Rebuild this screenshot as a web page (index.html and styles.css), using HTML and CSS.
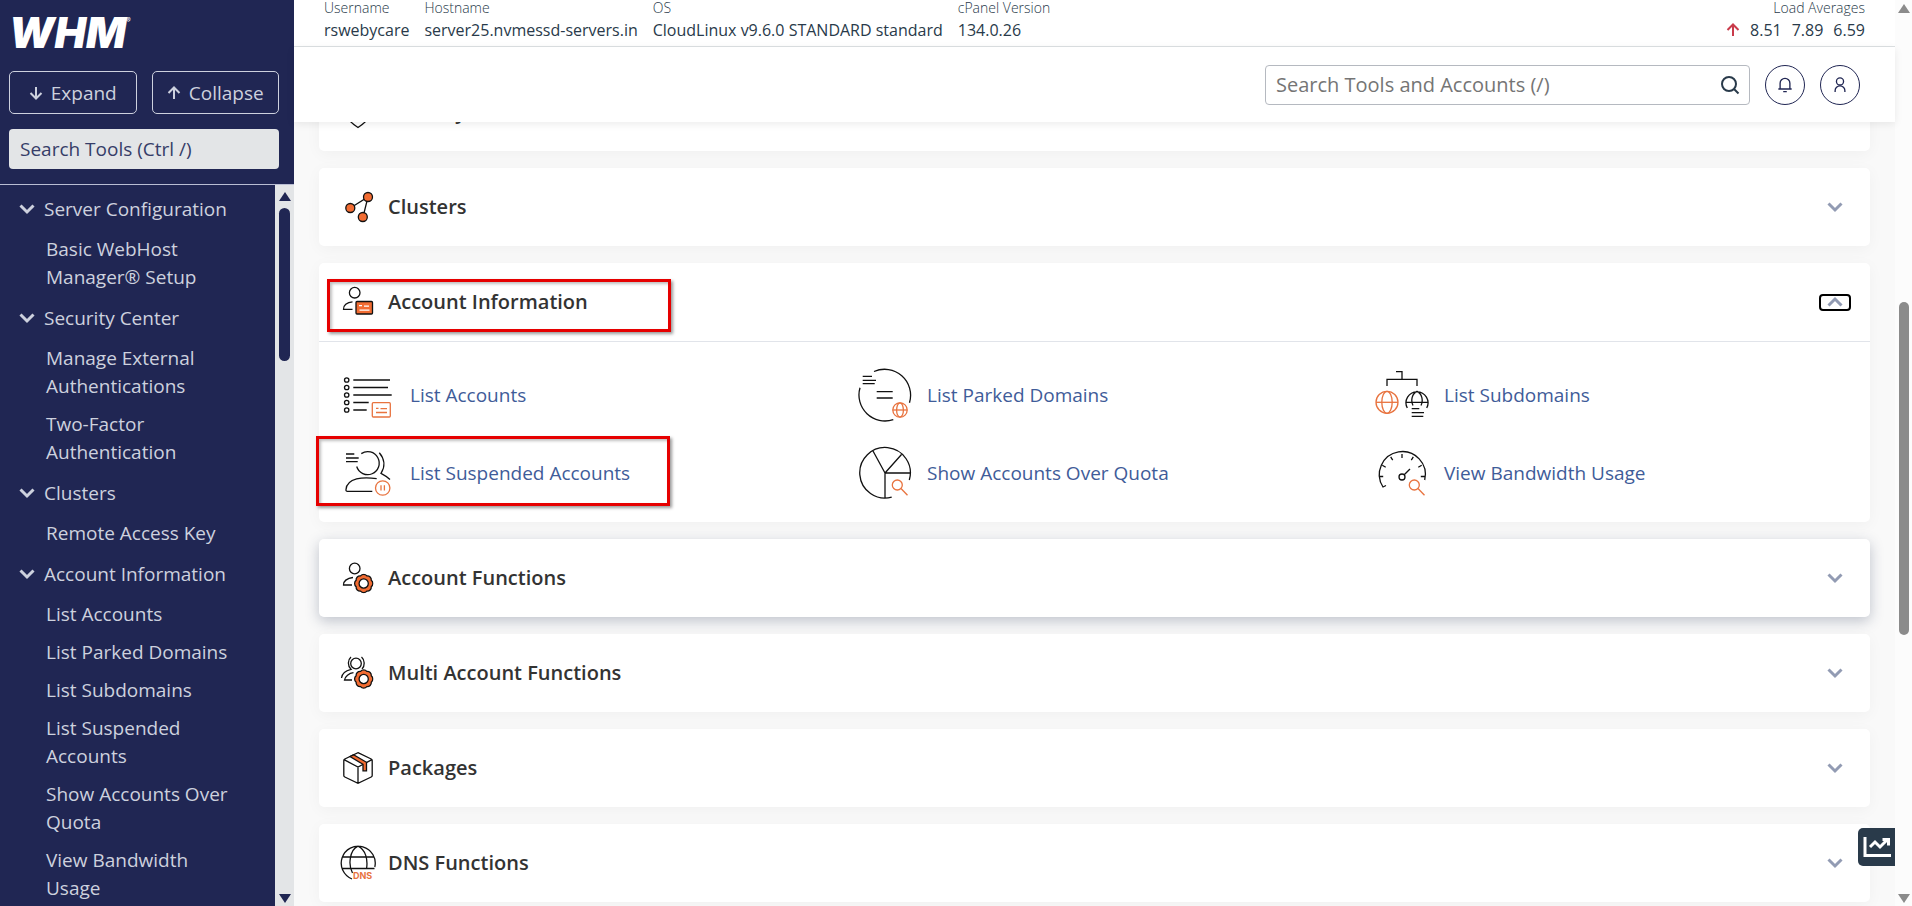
FILE: index.html
```
<!DOCTYPE html>
<html lang="en">
<head>
    <meta charset="UTF-8">
    <title>WHM</title>
    <meta name="viewport" content="width=device-width, initial-scale=1">
    <link rel="stylesheet" href="styles.css">
</head>
<body>
<svg class="defs" aria-hidden="true">
    <symbol id="chevron" viewBox="0 0 16 12"><path d="M1.500 2.500l6.500 6.500 6.500-6.500"/></symbol>
    <symbol id="arrow-up" viewBox="0 0 14 14"><path d="M7 13V1.500M1.500 7L7 1.500 12.500 7"/></symbol>
    <symbol id="gear" viewBox="-10 -10 20 20">
        <path d="M7.580 3.140A4 4 0 0 1 3.140 7.580 4 4 0 0 1-3.140 7.580 4 4 0 0 1-7.580 3.140 4 4 0 0 1-7.580-3.140 4 4 0 0 1-3.140-7.580 4 4 0 0 1 3.140-7.580 4 4 0 0 1 7.580-3.140 4 4 0 0 1 7.580 3.140z"/>
        <circle r="4.600" fill="#fff"/>
    </symbol>
</svg>

<aside class="sidebar">
    <div class="side-head">
        <a class="logo" href="#">WHM<sup>®</sup></a>
        <div class="side-buttons">
            <button type="button"><svg class="arrow down"><use href="#arrow-up"/></svg>Expand</button>
            <button type="button"><svg class="arrow"><use href="#arrow-up"/></svg>Collapse</button>
        </div>
        <input class="side-search" type="text" placeholder="Search Tools (Ctrl /)" aria-label="Search Tools">
    </div>
    <div class="side-body">
        <nav class="menu">
            <button type="button" class="group"><svg class="chev"><use href="#chevron"/></svg>Server Configuration</button>
            <ul>
                <li><a href="#">Basic WebHost Manager® Setup</a></li>
            </ul>
            <button type="button" class="group"><svg class="chev"><use href="#chevron"/></svg>Security Center</button>
            <ul>
                <li><a href="#">Manage External Authentications</a></li>
                <li><a href="#">Two-Factor Authentication</a></li>
            </ul>
            <button type="button" class="group"><svg class="chev"><use href="#chevron"/></svg>Clusters</button>
            <ul>
                <li><a href="#">Remote Access Key</a></li>
            </ul>
            <button type="button" class="group"><svg class="chev"><use href="#chevron"/></svg>Account Information</button>
            <ul>
                <li><a href="#">List Accounts</a></li>
                <li><a href="#">List Parked Domains</a></li>
                <li><a href="#">List Subdomains</a></li>
                <li><a href="#">List Suspended Accounts</a></li>
                <li><a href="#">Show Accounts Over Quota</a></li>
                <li><a href="#">View Bandwidth Usage</a></li>
            </ul>
        </nav>
        <div class="scroll side-scroll" aria-hidden="true">
            <i class="tri"></i><i class="thumb"></i><i class="tri tri-down"></i>
        </div>
    </div>
</aside>

<div class="page">
    <header class="info">
        <dl>
            <div><dt>Username</dt><dd>rswebycare</dd></div>
            <div><dt>Hostname</dt><dd>server25.nvmessd-servers.in</dd></div>
            <div><dt>OS</dt><dd>CloudLinux v9.6.0 STANDARD standard</dd></div>
            <div><dt>cPanel Version</dt><dd>134.0.26</dd></div>
        </dl>
        <dl>
            <div class="load">
                <dt>Load Averages</dt>
                <dd><svg class="arrow load-arrow"><use href="#arrow-up"/></svg><span>8.51</span><span>7.89</span><span>6.59</span></dd>
            </div>
        </dl>
    </header>
    <div class="toolbar">
        <form class="search">
            <input type="text" placeholder="Search Tools and Accounts (/)" aria-label="Search Tools and Accounts">
            <button type="button" aria-label="Search">
                <svg width="20" height="20" viewBox="0 0 20 20"><circle cx="9" cy="9" r="7"/><path d="M14 14l4.500 4.500"/></svg>
            </button>
        </form>
        <button type="button" class="round" aria-label="Notifications">
            <svg width="18" height="18" viewBox="0 0 18 18"><path d="M1.500 13.500h15M3.500 13.500V7a5.500 5.500 0 0 1 11 0v6.500M7 16.500h4"/></svg>
        </button>
        <button type="button" class="round" aria-label="User">
            <svg width="18" height="18" viewBox="0 0 18 18"><circle cx="9" cy="5" r="4"/><path d="M3.500 17v-1.500a5.500 5.500 0 0 1 11 0V17"/></svg>
        </button>
    </div>

    <main class="content">
        <div class="cards">
            <section class="card">
                <div class="card-head">
                    <svg class="icon" viewBox="0 0 36 36"><path d="M18 2l13 4v10c0 8-6 13-13 17.500C11 29 5 24 5 16V6z"/></svg>
                    <h2>Security Center</h2>
                    <button type="button" class="toggle" aria-label="Expand"><svg class="chev"><use href="#chevron"/></svg></button>
                </div>
            </section>

            <section class="card">
                <div class="card-head">
                    <svg class="icon" viewBox="0 0 36 36"><path d="M10.300 19L28 8l-5 20"/><g class="fill"><circle cx="10.300" cy="19" r="4.500"/><circle cx="28" cy="8" r="4.500"/><circle cx="22.800" cy="28" r="4.500"/></g></svg>
                    <h2>Clusters</h2>
                    <button type="button" class="toggle" aria-label="Expand"><svg class="chev"><use href="#chevron"/></svg></button>
                </div>
            </section>

            <section class="card">
                <div class="card-head">
                    <svg class="icon" viewBox="0 0 36 36">
                        <circle cx="14.700" cy="8.700" r="5.300"/><path d="M12.500 17.800C7 18 3 21.500 3.500 25.300h9"/>
                        <rect class="fill" x="16" y="17.500" width="16.500" height="12.500" rx="1"/>
                        <path stroke="#fff" d="M19 21.700h3M24 22.200h5M19.500 26.200h10"/>
                    </svg>
                    <h2>Account Information</h2>
                    <button type="button" class="toggle focus" aria-label="Collapse"><svg class="chev up"><use href="#chevron"/></svg></button>
                    <span class="mark mark-head"></span>
                </div>
                <ul class="tools">
                    <li>
                        <svg class="tool-icon" viewBox="0 0 54 54">
                            <circle cx="5.700" cy="12" r="2.200"/><circle cx="5.700" cy="19.500" r="2.200"/><circle cx="5.700" cy="27" r="2.200"/><circle cx="5.700" cy="34.500" r="2.200"/><circle cx="5.700" cy="42" r="2.200"/>
                            <path d="M12.300 12H49M12.300 19.500H47M12.300 27h38.400M12.300 34.500h15.400M12.300 42h13.400"/>
                            <g class="orange"><rect x="31.300" y="34.700" width="18" height="14.300" rx="1"/><path d="M35 40.300h2.500M39.500 40.700H46M35 44.500h11"/></g>
                        </svg>
                        <a href="#">List Accounts</a>
                    </li>
                    <li>
                        <svg class="tool-icon" viewBox="0 0 54 54">
                            <path d="M16 3.500A26 26 0 0 1 51.500 34.700M35.300 51.600A26 26 0 0 1 2 19.700M4.700 8.300H14M4.700 12.300h13.300M4.700 15.700h12M18.700 23.700h16M18.700 30h16"/>
                            <g class="orange"><circle cx="42" cy="42" r="7.200"/><ellipse cx="42" cy="42" rx="3.400" ry="7.200"/><path d="M34.800 42h14.400"/></g>
                        </svg>
                        <a href="#">List Parked Domains</a>
                    </li>
                    <li>
                        <svg class="tool-icon" viewBox="0 0 54 54">
                            <path d="M21 3.700h6v7.600M12 18v-6.700h30V18M32.300 40A11 11 0 1 1 51.700 40M31 34.300h22M38 37.500c-2.500-5-1-12 4-14.200 5 2.200 6.500 9.200 4 14.200M36.700 40.700h7.600M36.700 44.700H49M36.700 48.300h11.600"/>
                            <g class="orange"><circle cx="12" cy="34.300" r="11"/><ellipse cx="12" cy="34.300" rx="5.200" ry="11"/><path d="M1 34.300h22"/></g>
                        </svg>
                        <a href="#">List Subdomains</a>
                    </li>
                    <li>
                        <svg class="tool-icon" viewBox="0 0 54 54">
                            <path d="M5 8h8.300M5 12h12.700M5 15.700h11.700M20.300 7.600A11.500 11.500 0 1 1 15.700 20.500M38.300 6.700c5.500 6.300 6 14 1.700 20.600 3 1.500 6 3.500 9 6.200M35.700 32.700C22 30.500 6 32 5 43.500q-.3 1.800 1.500 1.800h24.800"/>
                            <g class="orange"><circle cx="41.700" cy="42" r="7.200"/><path d="M40 39.300v5.200M43.400 39.300v5.200"/></g>
                        </svg>
                        <a href="#">List Suspended Accounts</a>
                        <span class="mark mark-tool"></span>
                    </li>
                    <li>
                        <svg class="tool-icon" viewBox="0 0 54 54">
                            <path d="M33.700 51.200A25.300 25.300 0 1 1 51.300 34M27 52V27h25.300M27 27L15 5M27 27L43.500 8.500"/>
                            <g class="orange"><circle cx="39.300" cy="39" r="5"/><path d="M43 42.500l6.500 6.800"/></g>
                        </svg>
                        <a href="#">Show Accounts Over Quota</a>
                    </li>
                    <li>
                        <svg class="tool-icon" viewBox="0 0 54 54">
                            <path d="M11 39.500l-3 1.500A23 23 0 1 1 49.700 34M27 8v4M38.300 10.800l-2 3.400M46.700 19.200l-3.400 2M49.800 30.500h-4M15.700 10.800l2 3.400M7.300 19.200l3.400 2M4.200 30.500h4"/>
                            <circle cx="27" cy="31" r="3"/><path d="M29.200 28.800L35 23"/>
                            <g class="orange"><circle cx="39.300" cy="39" r="5"/><path d="M43 42.500l6.500 6.800"/></g>
                        </svg>
                        <a href="#">View Bandwidth Usage</a>
                    </li>
                </ul>
            </section>

            <section class="card raised">
                <div class="card-head">
                    <svg class="icon" viewBox="0 0 36 36">
                        <circle cx="14.700" cy="8.500" r="5.300"/><path d="M13 17.500C7 18 3 21.500 3.500 25h8.500"/>
                        <use class="fill" href="#gear" x="13.700" y="13.500" width="20" height="20"/>
                    </svg>
                    <h2>Account Functions</h2>
                    <button type="button" class="toggle" aria-label="Expand"><svg class="chev"><use href="#chevron"/></svg></button>
                </div>
            </section>

            <section class="card">
                <div class="card-head">
                    <svg class="icon" viewBox="0 0 36 36">
                        <circle cx="16" cy="8.500" r="5.300"/><path d="M13.500 17.700C9 18 5 21.500 4.500 25h7.500M11 2c-3.500 3-3.500 9 0 12.300C6 15.500 2 18 1.500 23M21.500 2c3.500 3 3.500 9 .5 12"/>
                        <use class="fill" href="#gear" x="13.700" y="14" width="20" height="20"/>
                    </svg>
                    <h2>Multi Account Functions</h2>
                    <button type="button" class="toggle" aria-label="Expand"><svg class="chev"><use href="#chevron"/></svg></button>
                </div>
            </section>

            <section class="card">
                <div class="card-head">
                    <svg class="icon" viewBox="0 0 36 36">
                        <path d="M18 2.700L31.200 9q1 .5 1 1.500v15q0 1-1 1.500L18 33.300 4.800 27q-1-.5-1-1.500v-15q0-1 1-1.500zM4 9.700l14 7.300 14-7.300M18 17v16"/>
                        <path class="fill" d="M10 6.600l3.500-1.800 13 7.500v8.500h-3.500v-6.500z"/>
                    </svg>
                    <h2>Packages</h2>
                    <button type="button" class="toggle" aria-label="Expand"><svg class="chev"><use href="#chevron"/></svg></button>
                </div>
            </section>

            <section class="card">
                <div class="card-head">
                    <svg class="icon" viewBox="0 0 36 36">
                        <path d="M12 34A17 17 0 1 1 34.800 22M2.500 12h31M1.500 23.500h33M12.500 28C8 20 9.500 5 18 1.200 26 5 28 15 26.500 24"/>
                        <text x="13" y="34">DNS</text>
                    </svg>
                    <h2>DNS Functions</h2>
                    <button type="button" class="toggle" aria-label="Expand"><svg class="chev"><use href="#chevron"/></svg></button>
                </div>
            </section>
        </div>
        <button type="button" class="stats" aria-label="Statistics">
            <svg width="28" height="22" viewBox="0 0 28 22"><path d="M2 1v18.500h26M7 11l5-5 5 5 7-7M19.500 3.500h6v6"/></svg>
        </button>
    </main>
</div>

<div class="scroll page-scroll" aria-hidden="true">
    <i class="tri"></i><i class="thumb"></i><i class="tri tri-down"></i>
</div>
</body>
</html>
```
FILE: styles.css
```
* {
    box-sizing: border-box;
}

body {
    display: flex;
    height: 100vh;
    margin: 0;
    overflow: hidden;
    background: #f9f9f9;
    color: #293a4a;
    font-family: "Open Sans", "Noto Sans", sans-serif;
    font-size: 16px;
}

button, input {
    font-family: inherit;
    margin: 0;
}

button {
    padding: 0;
    background: none;
    border: 0;
    color: inherit;
    cursor: pointer;
}

ul, dl, dd, h2 {
    margin: 0;
    padding: 0;
    list-style: none;
}

a {
    text-decoration: none;
}

svg {
    flex: none;
    fill: none;
    stroke: currentColor;
}

.defs {
    position: absolute;
    width: 0;
    height: 0;
}

.arrow {
    width: 14px;
    height: 14px;
    stroke-width: 2;
}

.down, .up {
    transform: rotate(180deg);
}

.chev {
    width: 16px;
    height: 12px;
    stroke-width: 3;
}

/* sidebar */
.sidebar {
    display: flex;
    flex-direction: column;
    flex: none;
    width: 294px;
    background: #202653;
    color: #cdd1de;
}

.side-head {
    padding: 17px 15px 15px 9px;
    border-bottom: 1px solid #b9bdd3;
}

.logo {
    display: flex;
    height: 31px;
    margin-bottom: 23px;
    color: #fff;
    font: italic 900 42px/31px Inter, sans-serif;
}

.logo sup {
    font-size: 7px;
    font-style: normal;
    font-weight: 400;
    line-height: 7px;
}

.side-buttons {
    display: flex;
    gap: 15px;
    margin-bottom: 15px;
}

.side-buttons button {
    display: flex;
    flex: 1;
    align-items: center;
    justify-content: center;
    gap: 8px;
    height: 43px;
    border: 1px solid #cdd1de;
    border-radius: 5px;
    font-size: 19px;
}

.side-search {
    display: block;
    width: 100%;
    height: 40px;
    padding: 0 11px;
    background: #e3e5e7;
    border: 0;
    border-radius: 4px;
    font-size: 19px;
}

.side-search::placeholder {
    color: #363d68;
    opacity: 1;
}

.side-body {
    display: flex;
    flex: 1;
    min-height: 0;
}

.menu {
    flex: 1;
    padding-top: 5px;
    overflow: hidden;
    font-size: 19px;
    line-height: 28px;
}

.group {
    display: flex;
    align-items: center;
    gap: 9px;
    padding: 5px 0 5px 19px;
    font-size: 19px;
    line-height: 28px;
}

.menu ul {
    padding: 2px 40px 3px 46px;
}

.menu a {
    display: block;
    padding: 5px 0;
    color: inherit;
}

/* scrollbars */
.scroll {
    display: flex;
    flex: none;
    flex-direction: column;
    align-items: center;
}

.tri {
    border: 6px solid transparent;
    border-top-width: 0;
    border-bottom: 9px solid currentColor;
}

.tri-down {
    margin-top: auto;
    transform: rotate(180deg);
}

.thumb {
    border-radius: 6px;
    background: currentColor;
}

.side-scroll {
    width: 19px;
    padding: 7px 0 3px;
    background: #e3e5e7;
    color: #202653;
}

.side-scroll .thumb {
    width: 11px;
    height: 153px;
    margin-top: 7px;
}

.page-scroll {
    width: 17px;
    padding: 4px 0 3px;
    background: #fcfcfc;
    color: #8b8b8b;
}

.page-scroll .thumb {
    width: 10px;
    height: 37%;
    margin-top: 289px;
}

/* header */
.page {
    display: flex;
    flex: 1;
    flex-direction: column;
    min-width: 0;
}

.info {
    display: flex;
    justify-content: space-between;
    height: 47px;
    padding: 0 30px;
    background: #fff;
    border-bottom: 1px solid #dde1e3;
    line-height: 24px;
    white-space: nowrap;
}

.info dl {
    display: flex;
    gap: 15px;
}

.info dt {
    height: 18px;
    font-size: 14px;
    font-weight: 300;
    line-height: 16px;
}

.load {
    text-align: right;
}

.load dd {
    display: flex;
    align-items: center;
    gap: 10px;
}

.load-arrow {
    color: #c93b4b;
}

.toolbar {
    position: relative;
    z-index: 1;
    display: flex;
    align-items: center;
    justify-content: flex-end;
    gap: 15px;
    height: 75px;
    flex: none;
    padding: 0 35px;
    background: #fff;
    box-shadow: 0 2px 8px rgba(0, 0, 0, .08);
}

.search {
    display: flex;
    width: 485px;
    height: 40px;
    border: 1px solid #b5b9c0;
    border-radius: 4px;
}

.search input {
    flex: 1;
    padding: 0 10px;
    background: none;
    border: 0;
    font-size: 20px;
}

.search input::placeholder {
    color: #757575;
}

.search button {
    display: flex;
    align-items: center;
    padding: 0 9px;
    stroke-width: 2;
}

.round {
    display: flex;
    align-items: center;
    justify-content: center;
    width: 40px;
    height: 40px;
    border: 1px solid #202653;
    border-radius: 50%;
    color: #202653;
    stroke-width: 1.500;
}

.round svg {
    width: 16px;
    height: 18px;
}

/* content */
.content {
    position: relative;
    flex: 1;
    min-height: 0;
    overflow: hidden;
}

.cards {
    display: flex;
    flex-direction: column;
    gap: 17px;
    margin-top: -49px;
    padding: 0 25px;
}

.card {
    background: #fff;
    border-radius: 5px;
    box-shadow: 0 3px 16px rgba(0, 0, 0, .04);
}

.raised {
    box-shadow: 0 4px 14px rgba(40, 55, 85, .28);
}

.card-head {
    position: relative;
    display: flex;
    align-items: center;
    gap: 12px;
    height: 78px;
    padding: 0 19px 0 21px;
}

.card-head h2 {
    flex: 1;
    padding-bottom: 2px;
    color: #333;
    font-size: 20px;
    font-weight: 600;
}

.icon {
    width: 36px;
    height: 36px;
    color: #111;
    stroke-width: 1.300;
}

.fill {
    fill: #f26c32;
}

.icon text {
    fill: #e8733f;
    stroke: none;
    font: 700 9px Inter, sans-serif;
}

.toggle {
    display: flex;
    align-items: center;
    justify-content: center;
    width: 32px;
    height: 17px;
    border-radius: 4px;
    color: #929bb3;
}

.focus {
    border: 2px solid #000;
}

.tools {
    display: grid;
    grid-template-columns: repeat(3, 1fr);
    padding: 14px 0 10px;
    border-top: 1px solid #e1e4ea;
}

.tools li {
    position: relative;
    display: flex;
    align-items: center;
    gap: 15px;
    height: 78px;
    padding-left: 22px;
}

.tools a {
    color: #3f5c99;
    font-size: 19px;
}

.tool-icon {
    width: 54px;
    height: 54px;
    color: #111;
    stroke-width: 1.300;
}

.orange {
    stroke: #e8733f;
}

/* red callout frames over the card */
.mark {
    position: absolute;
    border: 3px solid #e60000;
    box-shadow: 2px 2px 3px rgba(0, 0, 0, .4), inset 2px 2px 3px rgba(0, 0, 0, .25);
    pointer-events: none;
}

.mark-head {
    top: 16px;
    left: 8px;
    width: 344px;
    height: 53px;
}

.mark-tool {
    top: 2px;
    left: -3px;
    width: 354px;
    height: 70px;
}

.stats {
    position: absolute;
    right: 0;
    bottom: 40px;
    display: flex;
    align-items: center;
    justify-content: center;
    width: 37px;
    height: 38px;
    background: #293a4a;
    border-radius: 5px 0 0 5px;
    color: #fff;
    stroke-width: 3;
}
```
